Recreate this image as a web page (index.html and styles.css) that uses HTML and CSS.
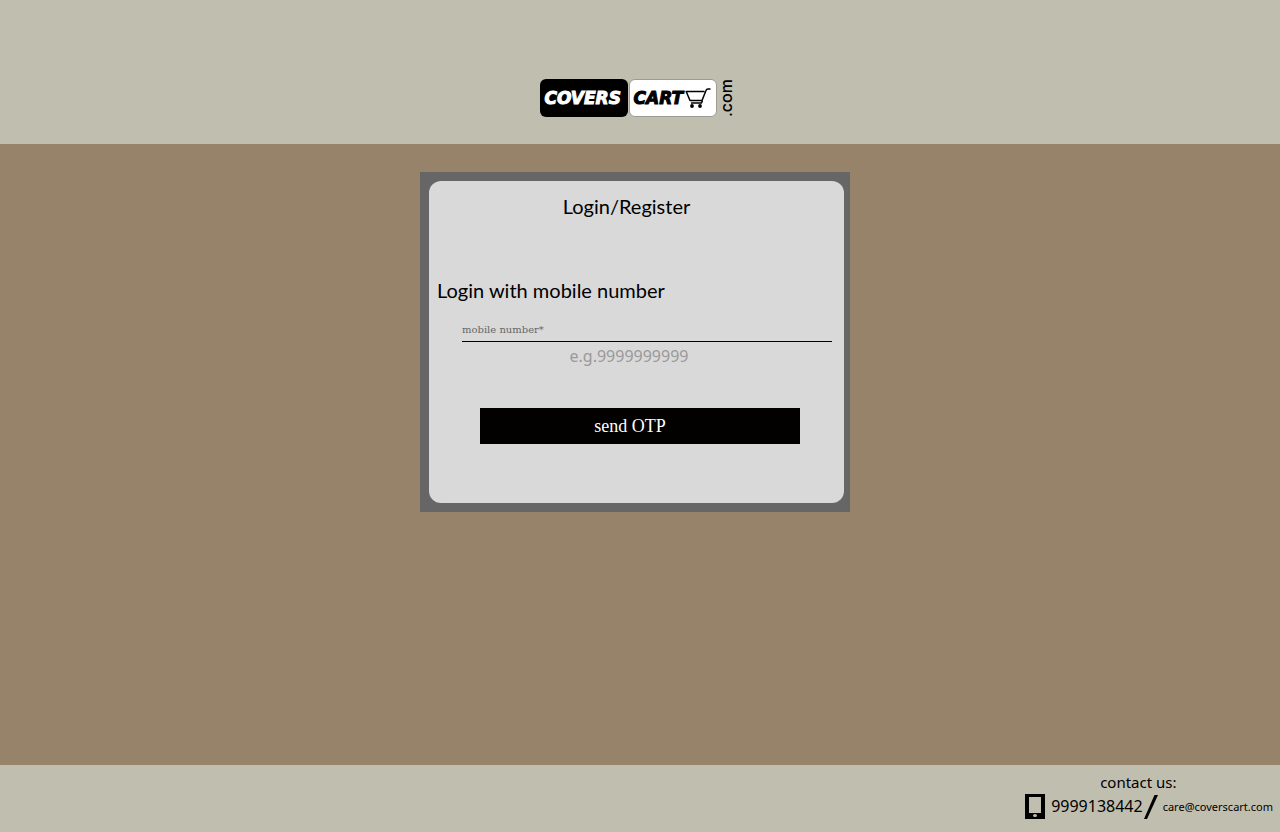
FILE: index.html
```html
<!DOCTYPE html>
<html lang="en">
<head>
<meta charset="utf-8">
<meta name="viewport" content="width=device-width, initial-scale=1">
<title>CoversCart – Login</title>
<link rel="stylesheet" href="styles.css">
</head>
<body>
<header class="header">
  <div class="logo">
    <span class="logo-box logo-dark">COVERS</span>
    <span class="logo-box logo-light">CART
      <svg class="cart" viewBox="0 0 26 20" width="26" height="20" aria-hidden="true">
        <path d="M19.500 3.500H1.200L5 12.500h12L21 2.500Q21.500 1 23 1h2.500M6 15h10.500l1-2.500" fill="none" stroke="#000" stroke-width="1.500" stroke-linejoin="round"/>
        <circle cx="7" cy="18" r="1.900"/><circle cx="15" cy="18" r="1.900"/>
      </svg>
    </span>
    <span class="logo-com">.com</span>
  </div>
</header>
<main class="main">
  <section class="frame">
    <form class="card">
      <h1 class="title">Login/Register</h1>
      <h2 class="subtitle">Login with mobile number</h2>
      <div class="field">
        <label class="label" for="mobile">mobile number*</label>
        <input class="input" id="mobile" type="tel" placeholder="e.g.9999999999">
      </div>
      <button class="button" type="button">send OTP</button>
    </form>
  </section>
</main>
<footer class="footer">
  <div class="contact">
    <p class="contact-title">contact us:</p>
    <div class="contact-row">
      <svg class="phone" viewBox="0 0 20 25" width="20" height="25" aria-hidden="true">
        <path fill-rule="evenodd" d="M0 0h20v25H0zM4 3v16h12V3z"/>
        <ellipse cx="10" cy="21.500" rx="2" ry="1.500" fill="#c0beaf"/>
      </svg>
      <a class="number" href="tel:9999138442">9999138442</a>
      <svg class="slash" viewBox="0 0 14 26" width="14" height="26" aria-hidden="true">
        <path d="M0 25L10.500 1H14L3 25z"/>
      </svg>
      <a class="email" href="mailto:care@coverscart.com">care@coverscart.com</a>
    </div>
  </div>
</footer>
</body>
</html>
```
FILE: styles.css
```css
* { box-sizing: border-box; }

body {
  margin: 0;
  min-height: 100vh;
  display: flex;
  flex-direction: column;
  background: #97836a;
  color: #000;
  font-family: "Noto Sans", sans-serif;
}

.header {
  display: flex;
  justify-content: center;
  padding: 79px 7px 27px 0;
  background: #c0beaf;
}

.logo { display: flex; gap: 1px; }

.logo-box {
  display: flex;
  align-items: center;
  width: 88px;
  height: 38px;
  padding-left: 5px;
  border-radius: 6px;
  font: italic 700 17px/20px "DejaVu Sans", sans-serif;
  -webkit-text-stroke: 1px currentColor;
}

.logo-dark { background: #000; color: #fff; }

.logo-light { background: #fff; border: 1px solid #9c9c92; padding-left: 4px; }

.cart { flex: none; margin-left: 2px; }

.logo-com {
  writing-mode: vertical-rl;
  transform: rotate(180deg);
  font: 500 16px/16px Inter, sans-serif;
}

.main {
  flex: 1;
  display: flex;
  justify-content: center;
  align-items: flex-start;
  padding: 28px 10px 28px 0;
}

.frame {
  width: 100%;
  max-width: 430px;
  padding: 9px 6px 9px 9px;
  background: #666;
}

.card {
  display: flex;
  flex-direction: column;
  padding: 11px 12px 59px 8px;
  border-radius: 12px;
  background: #d9d9d9;
}

.title, .subtitle {
  margin: 0;
  font: 400 20px/28px Lato, sans-serif;
}

.title { text-align: center; padding-right: 16px; }

.subtitle { margin-top: 56px; }

.field {
  display: flex;
  flex-direction: column;
  margin: 19px 0 0 25px;
}

.label {
  padding-bottom: 4px;
  color: #666;
  font: 10px/14px "DejaVu Serif", serif;
}

.input {
  width: 100%;
  height: 28px;
  padding: 0 36px 0 0;
  border: 0;
  border-top: 1px solid #000;
  background: transparent;
  text-align: center;
  font: 16px/20px "Noto Sans", sans-serif;
}

.input::placeholder { color: #999; opacity: 1; }

.button {
  height: 36px;
  margin: 39px 32px 0 43px;
  padding: 0 20px 0 0;
  border: 0;
  background: #030000;
  color: #fff;
  font: 18px/36px "Liberation Serif", serif;
}

.footer {
  display: flex;
  justify-content: flex-end;
  padding: 7px 7px 12px;
  background: #c0beaf;
}

.contact-title {
  margin: 0;
  padding: 0 0 1px 75px;
  font-size: 15px;
  line-height: 20px;
}

.contact-row { display: flex; align-items: center; }

.number, .email { color: inherit; text-decoration: none; }

.number { margin: 0 1px 0 6px; font-size: 16px; line-height: 27px; }

.email { margin-left: 5px; font-size: 11px; line-height: 27px; }
```
